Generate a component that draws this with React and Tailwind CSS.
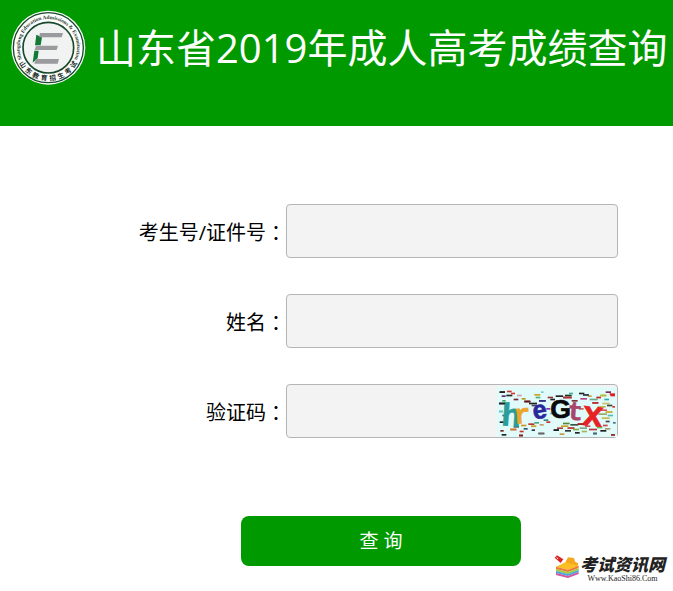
import React from "react";

const SANS = "font-['Open_Sans','Noto_Sans_CJK_SC',sans-serif]";

const SEAL_CHARS = ["山", "东", "教", "育", "招", "生", "考", "试"];

// x, y, width, colour of every dash behind and over the code
const DASHES = [
  [32, 34, 16, "#222"], [54, 32, 14, "#c33"], [38, 46, 12, "#5a2a7a"], [52, 44, 18, "#222"], [66, 38, 12, "#d33"],
  [30, 68, 18, "#222"], [40, 60, 10, "#3a6"], [84, 44, 14, "#d9a"], [98, 54, 12, "#b59a20"], [74, 56, 14, "#723"],
  [106, 62, 18, "#611"], [120, 68, 24, "#222"], [128, 74, 16, "#445"], [136, 42, 18, "#c9a227"], [140, 50, 14, "#5a7"],
  [150, 60, 20, "#338"], [156, 34, 8, "#7cc"], [176, 50, 16, "#933"], [184, 56, 14, "#222"], [200, 46, 22, "#222"],
  [222, 50, 26, "#a33"], [228, 44, 20, "#232"], [240, 38, 12, "#4a9"], [248, 60, 18, "#733"], [270, 38, 16, "#222"],
  [282, 42, 18, "#345"], [274, 54, 20, "#b48"], [296, 46, 12, "#c94"], [302, 56, 24, "#6a8"], [322, 50, 14, "#b22"],
  [334, 44, 18, "#bb4"], [350, 34, 16, "#7a2a5a"], [362, 40, 16, "#d22"], [364, 44, 14, "#d22"], [346, 56, 14, "#3aa"],
  [310, 66, 18, "#b33"], [340, 68, 22, "#c8c060"], [354, 74, 16, "#444"], [326, 78, 24, "#bb5"], [336, 88, 18, "#d55"],
  [350, 94, 20, "#c9b040"], [328, 100, 26, "#9a6"], [356, 104, 16, "#5bb"], [338, 112, 24, "#c6b84a"], [350, 122, 12, "#444"],
  [30, 92, 12, "#5cc"], [40, 104, 12, "#367"], [32, 124, 18, "#222"], [34, 150, 10, "#722"], [38, 162, 14, "#222"],
  [64, 146, 18, "#c73"], [74, 138, 16, "#555"], [92, 152, 12, "#c33"], [96, 134, 16, "#c92"], [104, 144, 12, "#357"],
  [90, 164, 12, "#822"], [118, 130, 18, "#b33"], [126, 136, 16, "#c9a227"], [128, 148, 10, "#335"], [136, 126, 14, "#4a8"],
  [148, 158, 18, "#666"], [152, 132, 12, "#c96"], [164, 118, 14, "#388"], [172, 124, 12, "#c33"], [184, 98, 12, "#5ab"],
  [194, 148, 16, "#222"], [204, 142, 18, "#a44"], [216, 136, 22, "#c9a227"], [222, 128, 20, "#583"], [228, 150, 18, "#333"],
  [236, 142, 20, "#b44"], [244, 132, 24, "#354"], [252, 146, 18, "#8a4"], [258, 156, 14, "#222"], [212, 160, 14, "#c94"],
  [266, 130, 18, "#a22"], [272, 142, 22, "#7a8"], [278, 152, 16, "#9b5"], [288, 136, 16, "#c55"], [300, 146, 24, "#b33"],
  [312, 158, 12, "#467"], [324, 140, 16, "#6b5"], [334, 150, 18, "#222"], [342, 134, 14, "#c44"], [348, 144, 16, "#a96"],
  [366, 162, 12, "#933"], [370, 78, 8, "#d33"], [372, 126, 8, "#478"], [172, 84, 12, "#83a"], [270, 84, 14, "#c66"],
];

// letter, x, y, size, colour, tilt, font
const CODE = [
  ["h", 36, 136, 96, "#2a9c9c", 4, "Liberation Mono"],
  ["r", 76, 132, 84, "#eca52c", -4, "Liberation Mono"],
  ["e", 134, 118, 76, "#29299c", -8, "Liberation Sans"],
  ["G", 184, 113, 80, "#0a0a0a", 0, "Liberation Sans"],
  ["t", 234, 118, 78, "#a8456a", 4, "Liberation Mono"],
  ["x", 276, 134, 108, "#e62222", 6, "Liberation Mono"],
];

function Seal() {
  return (
    <svg className="h-[75px] w-[75px] shrink-0" viewBox="35 27 225 225" role="img" aria-label="山东教育招生考试">
      <circle cx="147" cy="140" r="111" fill="#fff" />
      <circle cx="147" cy="140" r="105" fill="none" stroke="#17492a" strokeWidth="4" />
      <circle cx="147" cy="140" r="76" fill="#f1f3f2" stroke="#17492a" strokeWidth="5" />
      <path id="seal-arc" d="M67.3 172.2 A86 86 0 1 1 226.7 172.2" fill="none" />
      <text fill="#1d3a29" fontSize="16" fontWeight="700" fontFamily="Liberation Serif, serif">
        <textPath href="#seal-arc" startOffset="50%" textAnchor="middle">
          Shangdong Education Admissions &amp; Examination
        </textPath>
      </text>
      {SEAL_CHARS.map((char, i) => (
        <text
          key={char}
          x="147"
          y="239"
          transform={`rotate(${56 - i * 16} 147 140)`}
          textAnchor="middle"
          fill="#14281c"
          fontSize="20"
          fontWeight="700"
          fontFamily="Noto Sans CJK SC, sans-serif"
        >
          {char}
        </text>
      ))}
      <path d="M111 101 L128 109 L124 133 L107 133 Z M105 149 L118 149 L115 172 L100 185 Z" fill="#137a35" />
      <path d="M122 96 H191 L187 109 H119 Z M110 134 H176 L172 147 H106 Z M109 174 H179 L175 188 H105 Z" fill="#9b9b9f" />
    </svg>
  );
}

function Captcha() {
  return (
    <svg className="h-[50px] w-[120px]" viewBox="24 21 360 150" role="img" aria-label="验证码">
      <rect x="24" y="21" width="360" height="150" fill="#e0fbfa" />
      {DASHES.map(([x, y, w, color]) => (
        <rect key={`${x}-${y}`} x={x} y={y} width={w} height="5" fill={color} />
      ))}
      {CODE.map(([letter, x, y, size, color, tilt, font]) => (
        <text
          key={letter}
          x={x}
          y={y}
          transform={`rotate(${tilt} ${x} ${y})`}
          fontSize={size}
          fontWeight="700"
          fontFamily={font}
          fill={color}
          stroke={color}
          strokeWidth="2"
        >
          {letter}
        </text>
      ))}
      {DASHES.filter((_, i) => i % 5 === 0).map(([x, y, w, color]) => (
        <rect key={`top-${x}-${y}`} x={x} y={y} width={w} height="5" fill={color} />
      ))}
    </svg>
  );
}

function Field({ id, label, children }) {
  return (
    <div className="flex items-center">
      <label htmlFor={id} className="flex w-[142px] shrink-0 justify-end pt-[3px] text-xl whitespace-nowrap text-black">
        {label}
        <span className="font-['Noto_Sans_CJK_TC',sans-serif]">：</span>
      </label>
      <div className="relative flex-1">
        <input
          id={id}
          type="text"
          className="block h-[54px] w-full rounded border border-[#b5b5b5] bg-[#f3f3f3] px-3 text-xl outline-none"
        />
        {children}
      </div>
    </div>
  );
}

function SiteMark() {
  return (
    <div className="absolute right-2 bottom-[7px] flex items-start">
      <svg className="h-[26px] w-[26px]" viewBox="20 18 78 72" aria-hidden="true">
        <path d="M22 26 L29 19 L48 31 L40 42 Z" fill="#dc2626" />
        <path d="M28 26 L32 29" stroke="#fff" strokeWidth="3" />
        <path d="M62 25 L80 27 L83 38 L93 43 L90 54 L58 52 L54 40 Z" fill="#f5a81c" />
        <path d="M26 53 L54 40 L94 50 L62 62 Z" fill="#fbbf24" />
        <path d="M26 53 L62 62 L94 50 V57 L62 69 L26 60 Z" fill="#ee7a3a" />
        <path d="M26 60 L62 69 L94 57 V63 L62 75 L26 66 Z" fill="#a5c93c" />
        <path d="M26 66 L62 75 L94 63 V69 L62 81 L26 72 Z" fill="#45a5dc" />
        <path d="M26 72 L62 81 L94 69 V75 L62 87 L26 78 Z" fill="#cf56a0" />
      </svg>
      <div className="flex flex-col items-center text-[#222]">
        <span className="font-['Noto_Sans_CJK_SC',sans-serif] text-[17px] leading-5 font-black italic">考试资讯网</span>
        <span className="font-['Liberation_Serif',serif] text-[8px] leading-[10px]">Www.KaoShi86.Com</span>
      </div>
    </div>
  );
}

export default function App() {
  return (
    <div className={`relative min-h-screen overflow-hidden bg-white ${SANS}`}>
      <header className="flex items-center gap-[10px] bg-[#009900] pt-[10px] pr-1 pb-[41px] pl-[11px]">
        <Seal />
        <h1 className="text-[40px] leading-[50px] font-normal whitespace-nowrap text-white">
          山东省2019年成人高考成绩查询
        </h1>
      </header>

      <form
        className="mt-[78px] flex flex-col gap-9 pr-[55px] pl-36"
        onSubmit={(event) => event.preventDefault()}
      >
        <Field id="candidate" label="考生号/证件号" />
        <Field id="name" label="姓名" />
        <Field id="code" label="验证码">
          <div className="absolute right-px bottom-px">
            <Captcha />
          </div>
        </Field>
        <button type="submit" className="mx-auto mt-[42px] h-[50px] w-[280px] rounded-lg bg-[#009900] text-[19px] text-white">
          查 询
        </button>
      </form>

      <SiteMark />
    </div>
  );
}
